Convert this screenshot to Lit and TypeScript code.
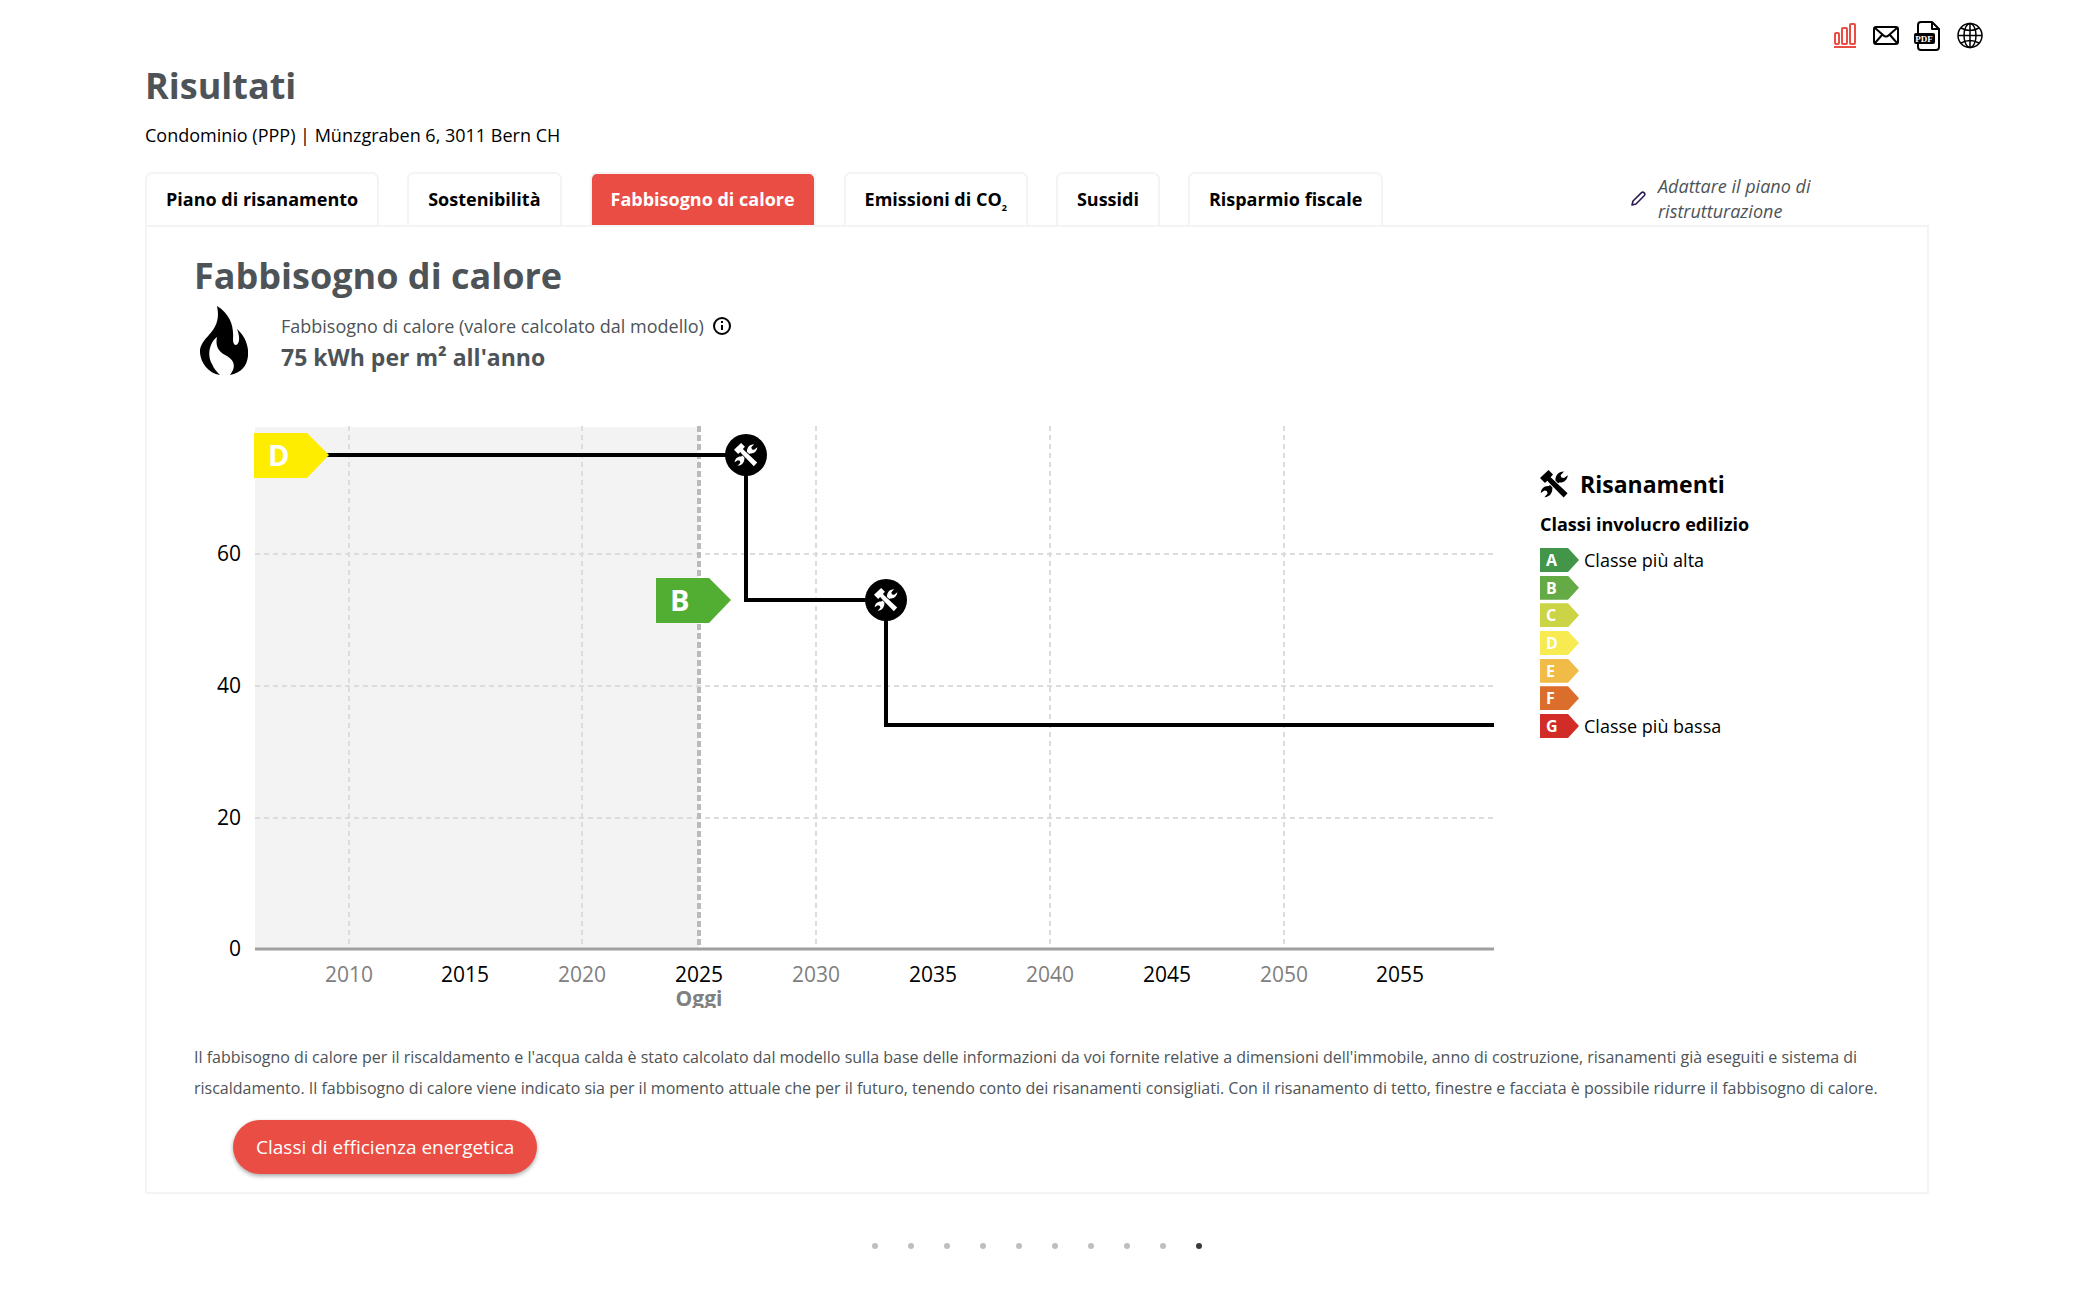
import { LitElement, html, svg, css, nothing } from "lit";
import { customElement, state } from "lit/decorators.js";
import { classMap } from "lit/directives/class-map.js";

const toolsShape = svg`
  <path d="M0 8 L8.5 0 L13 4.5 L10.6 7.2 L12 8.6 L27.6 23.2 L23.6 27.6 L8.6 12.2 L7.4 10.8 L5 13 Z"/>
  <path d="M15.4 10.4 C15.4 6 18 1.6 24 1.6 L20.6 5.2 L21.4 7.6 L24 8 L27.8 5.2 C27.4 10 23.6 13 19.2 12.4 L18.2 13.2 Z"/>
  <path d="M12.4 17.4 C12.6 22.8 10 26.8 4.4 27.2 L7.6 23.4 L6.8 21 L4.4 20.4 L0.8 23 C1 18.4 4.6 15.6 8.8 16 L10 15 Z"/>`;

interface Step {
  from: number;
  to: number;
  value: number;
}

@customElement("heat-chart")
export class HeatChart extends LitElement {
  static styles = css`
    :host { display: block; min-width: 0; }
    .chart { display: block; width: 100%; height: auto; overflow: hidden; font-family: "Open Sans", "Noto Sans", sans-serif; }
    .past { fill: #f3f3f3; }
    .grid { stroke: #dcdcdc; stroke-width: 2; stroke-dasharray: 5 4; }
    .today { stroke: #bababa; stroke-width: 4; stroke-dasharray: 6 3; }
    .axis { stroke: #9f9f9f; stroke-width: 3; }
    .series { fill: none; stroke: #000; stroke-width: 4; }
    .tick { font-size: 21px; fill: #000; }
    .middle { text-anchor: middle; }
    .end { text-anchor: end; }
    .muted { fill: #808080; }
    .now { font-weight: 700; }
    .grade { font-size: 29px; font-weight: 700; fill: #fff; }
    .tools { fill: #fff; }
    .gradeD { fill: #ffed00; }
    .gradeB { fill: #52ae32; }
  `;

  private steps: Step[] = [
    { from: 2006, to: 2027, value: 75 },
    { from: 2027, to: 2033, value: 53 },
    { from: 2033, to: 2059, value: 34 },
  ];

  private x(year: number) {
    return Math.round(61 + ((year - 2006) * 1239) / 53);
  }

  private y(value: number) {
    return Math.round(539.4 - value * 6.59);
  }

  private badge(x: number, y: number, letter: string, cls: string) {
    return svg`
      <path class=${cls} d="M${x} ${y - 22} h53 l22 22 l-22 23 h-53 z"/>
      <text class="grade" x=${x + 14} y=${y + 11}>${letter}</text>`;
  }

  render() {
    const years = [2010, 2015, 2020, 2025, 2030, 2035, 2040, 2045, 2050, 2055];
    const line = this.steps
      .map((s, i) => `${i ? "L" : "M"}${this.x(s.from)} ${this.y(s.value)} L${this.x(s.to)} ${this.y(s.value)}`)
      .join(" ");
    return html`
      <svg class="chart" viewBox="0 0 1346 598" role="img" aria-label="Fabbisogno di calore 2006–2059">
        <rect class="past" x="61" y="17" width=${this.x(2025) - 61} height="522"></rect>
        ${[20, 40, 60].map((v) => svg`<line class="grid" x1="61" x2="1300" y1=${this.y(v)} y2=${this.y(v)}></line>`)}
        ${years
          .filter((v) => v % 10 === 0)
          .map((v) => svg`<line class="grid" x1=${this.x(v)} x2=${this.x(v)} y1="16" y2="538"></line>`)}
        <line class="today" x1=${this.x(2025)} x2=${this.x(2025)} y1="16" y2="538"></line>
        <line class="axis" x1="61" x2="1300" y1="539" y2="539"></line>
        ${[0, 20, 40, 60].map((v) => svg`<text class="tick end" x="47" y=${this.y(v) + 7}>${v}</text>`)}
        ${years.map(
          (v) => svg`<text class="tick middle ${v % 10 === 0 ? "muted" : ""}" x=${this.x(v)} y="572">${v}</text>`
        )}
        <text class="tick middle muted now" x=${this.x(2025)} y="596">Oggi</text>
        <path class="series" d=${line}></path>
        ${this.badge(60, this.y(75), "D", "gradeD")}
        ${this.badge(462, this.y(53), "B", "gradeB")}
        ${this.steps.slice(0, 2).map(
          (s) => svg`
            <circle cx=${this.x(s.to)} cy=${this.y(s.value)} r="21"></circle>
            <g class="tools" transform="translate(${this.x(s.to) - 12} ${this.y(s.value) - 12}) scale(0.84)">${toolsShape}</g>`
        )}
      </svg>
    `;
  }
}

@customElement("class-legend")
export class ClassLegend extends LitElement {
  static styles = css`
    :host { display: block; padding-top: 58px; color: #000; }
    .title { display: flex; align-items: center; gap: 12px; margin: 0; font-size: 23px; line-height: 32px; font-weight: 700; }
    .icon { width: 28px; height: 28px; }
    .subtitle { margin: 11px 0; font-size: 18px; line-height: 26px; font-weight: 700; }
    .list { display: flex; flex-direction: column; justify-content: space-between; height: 190px; margin: 0; padding: 0; list-style: none; }
    .row { display: flex; align-items: center; gap: 5px; height: 24px; font-size: 18px; }
    .tag {
      box-sizing: border-box; width: 39px; height: 24px; padding-left: 6px; color: #fff; font-size: 16px; line-height: 24px; font-weight: 700;
      clip-path: polygon(0 0, 28px 0, 100% 50%, 28px 100%, 0 100%);
    }
    .A { background: #43954a; }
    .B { background: #65ab45; }
    .C { background: #cbd444; }
    .D { background: #f7eb51; }
    .E { background: #f0bb47; }
    .F { background: #db6e2c; }
    .G { background: #d12c26; }
  `;

  render() {
    const notes: Record<string, string> = { A: "Classe più alta", G: "Classe più bassa" };
    return html`
      <h3 class="title"><svg class="icon" viewBox="0 0 28 28" aria-hidden="true">${toolsShape}</svg>Risanamenti</h3>
      <p class="subtitle">Classi involucro edilizio</p>
      <ul class="list">
        ${"ABCDEFG".split("").map(
          (l) => html`<li class="row"><span class="tag ${l}">${l}</span>${notes[l] ? html`<span>${notes[l]}</span>` : nothing}</li>`
        )}
      </ul>
    `;
  }
}

@customElement("app-root")
export class AppRoot extends LitElement {
  static styles = css`
    :host { display: block; background: #fff; color: #000; font-family: "Open Sans", "Noto Sans", sans-serif; }
    button { font-family: inherit; cursor: pointer; }
    .toolbar { display: flex; justify-content: flex-end; gap: 12px; height: 61px; padding: 20px 89px 0 0; box-sizing: border-box; }
    .tool { display: block; width: 30px; height: 32px; padding: 0; border: 0; background: none; }
    .tool svg { display: block; width: 30px; height: 32px; }
    .page { padding: 0 145px; }
    .title { margin: 0; color: #4d5357; font-size: 36px; line-height: 50px; font-weight: 700; }
    .address { margin: 11px 0 24px; font-size: 18px; line-height: 26px; }
    .bar { display: flex; justify-content: space-between; align-items: stretch; }
    .tabs { display: flex; gap: 28px; }
    .tab {
      padding: 13px 19px 14px; border: 2px solid #f4f4f4; border-bottom: 0; border-radius: 7px 7px 0 0;
      background: #fff; color: #000; font-size: 18px; line-height: 24px; font-weight: 700; white-space: nowrap;
    }
    .tab.active { background: #ea4d44; color: #fff; }
    .sub { font-size: 9px; line-height: 0; vertical-align: sub; }
    .edit {
      display: flex; align-items: center; gap: 12px; box-sizing: border-box; width: 298px;
      color: #4d5357; font-size: 18px; line-height: 25px; font-style: italic; text-decoration: none;
    }
    .pencil { flex: none; width: 15px; height: 15px; }
    .panel { padding: 24px 49px 18px 47px; border: 2px solid #f4f4f4; }
    .summary { display: flex; gap: 33px; margin-top: 5px; color: #4d5357; }
    .flame { width: 54px; height: 70px; fill: #000; }
    .facts { padding-top: 7px; }
    .label { display: flex; align-items: center; gap: 8px; margin: 0 0 2px; font-size: 18px; line-height: 26px; }
    .info { width: 20px; height: 20px; padding: 0; border: 0; background: none; }
    .info svg { display: block; width: 20px; height: 20px; }
    .value { margin: 0; font-size: 23px; line-height: 32px; font-weight: 700; }
    .figure { display: grid; grid-template-columns: minmax(0, 1fr) 338px; margin-top: 34px; }
    .text { margin: 34px 0 16px; color: #4d5357; font-size: 16px; line-height: 31px; }
    .cta {
      display: block; height: 54px; margin-left: 39px; padding: 0 23px; border: 0; border-radius: 27px;
      background: #ea4d44; color: #fff; font-size: 19px; line-height: 54px; box-shadow: 0 2px 4px rgba(0, 0, 0, 0.35);
    }
    .dots { display: flex; justify-content: center; margin-top: 42px; }
    .dot { display: grid; place-items: center; width: 36px; height: 20px; padding: 0; border: 0; background: none; }
    .dot::before { content: ""; width: 6px; height: 6px; border-radius: 50%; background: #bfbfbf; }
    .dot.active::before { background: #3a3a3a; }
  `;

  @state() private active = 2;
  @state() private slide = 9;

  private tabs = [
    html`Piano di risanamento`,
    html`Sostenibilità`,
    html`Fabbisogno di calore`,
    html`Emissioni di CO<span class="sub">2</span>`,
    html`Sussidi`,
    html`Risparmio fiscale`,
  ];

  render() {
    return html`
      <div class="toolbar">
        <button class="tool" aria-label="Risultati">
          <svg viewBox="0 0 30 32" fill="none" stroke="#ea4d44" stroke-width="2">
            <rect x="6" y="13" width="4" height="11" rx="1"></rect>
            <rect x="13" y="8" width="5" height="16" rx="1"></rect>
            <rect x="21" y="4" width="5" height="20" rx="1"></rect>
            <path d="M5 27 H27"></path>
          </svg>
        </button>
        <button class="tool" aria-label="E-mail">
          <svg viewBox="0 0 30 32" fill="none" stroke="#000" stroke-width="2" stroke-linejoin="round">
            <rect x="3" y="7" width="24" height="17" rx="2"></rect>
            <path d="M4 8 L12 15 Q15 18 18 15 L26 8 M4 23 L11 15 M26 23 L19 15"></path>
          </svg>
        </button>
        <button class="tool" aria-label="PDF">
          <svg viewBox="0 0 30 32">
            <path fill="none" stroke="#000" stroke-width="2" stroke-linejoin="round" d="M5 13 V5 Q5 2 8 2 H19 L26 9 V27 Q26 30 23 30 H8 Q5 30 5 27 V23 M19 2 V9 H26"></path>
            <rect x="1" y="13" width="21" height="11" rx="2"></rect>
            <text x="11" y="22" font-family="Liberation Serif, serif" font-size="9" font-weight="700" fill="#fff" text-anchor="middle">PDF</text>
          </svg>
        </button>
        <button class="tool" aria-label="Lingua">
          <svg viewBox="0 0 30 32" fill="none" stroke="#000" stroke-width="1.5">
            <circle cx="15" cy="15.500" r="12"></circle>
            <ellipse cx="15" cy="15.500" rx="6" ry="12"></ellipse>
            <path d="M15 3.500 V27.500 M3 15.500 H27 M6 8 Q15 13 24 8 M6 23 Q15 18 24 23"></path>
          </svg>
        </button>
      </div>
      <main class="page">
        <h1 class="title">Risultati</h1>
        <p class="address">Condominio (PPP) | Münzgraben 6, 3011 Bern CH</p>
        <div class="bar">
          <div class="tabs" role="tablist">
            ${this.tabs.map(
              (t, i) => html`<button role="tab" aria-selected=${i === this.active} class=${classMap({ tab: true, active: i === this.active })}
                @click=${() => (this.active = i)}>${t}</button>`
            )}
          </div>
          <a class="edit" href="#piano">
            <svg class="pencil" viewBox="0 0 15 15" fill="none" stroke="#2a1a55" stroke-width="1.600" stroke-linejoin="round" aria-hidden="true">
              <path d="M1 14 L2 10 L10.500 1.600 Q11.800 0.600 13.200 1.800 Q14.400 3.200 13.400 4.500 L5 13 Z"></path>
            </svg>
            <span>Adattare il piano di ristrutturazione</span>
          </a>
        </div>
        <section class="panel">
          <h2 class="title">Fabbisogno di calore</h2>
          <div class="summary">
            <svg class="flame" viewBox="-2 0 54 70" aria-hidden="true">
              <path d="M21 0 C34 8 38 20 37 33 C37 37 38 39 40 39 C44 38 44 30 41 23 C49 30 53 40 52 50 C51 60 45 67 34 69 C40 61 39 55 31 50 C23 46 19 41 21 31 C13 37 11 50 16 58 C18 63 21 66 24 69 C12 67 5 57 4 47 C3 30 27 27 21 0 Z"></path>
            </svg>
            <div class="facts">
              <p class="label">Fabbisogno di calore (valore calcolato dal modello)
                <button class="info" aria-label="Informazioni">
                  <svg viewBox="0 0 20 20"><circle cx="10" cy="10" r="8" fill="none" stroke="#000" stroke-width="2"></circle><path d="M9 9 h2 v5 h-2 z M9 5 h2 v2 h-2 z"></path></svg>
                </button>
              </p>
              <p class="value">75 kWh per m² all'anno</p>
            </div>
          </div>
          <div class="figure">
            <heat-chart></heat-chart>
            <class-legend></class-legend>
          </div>
          <p class="text">Il fabbisogno di calore per il riscaldamento e l'acqua calda è stato calcolato dal modello sulla base delle informazioni da voi fornite relative a dimensioni dell'immobile, anno di costruzione, risanamenti già eseguiti e sistema di riscaldamento. Il fabbisogno di calore viene indicato sia per il momento attuale che per il futuro, tenendo conto dei risanamenti consigliati. Con il risanamento di tetto, finestre e facciata è possibile ridurre il fabbisogno di calore.</p>
          <button class="cta">Classi di efficienza energetica</button>
        </section>
        <nav class="dots" aria-label="Pagine">
          ${Array.from({ length: 10 }, (_, i) => html`<button aria-label="Pagina ${i + 1}" class=${classMap({ dot: true, active: i === this.slide })}
            @click=${() => (this.slide = i)}></button>`)}
        </nav>
      </main>
    `;
  }
}
